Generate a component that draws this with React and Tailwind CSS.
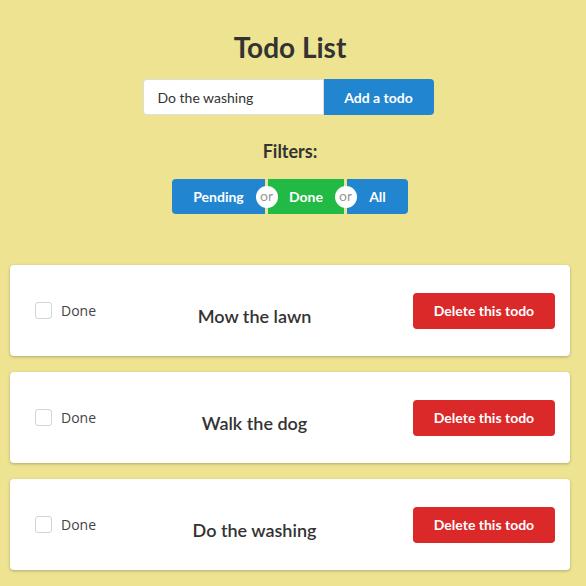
import React from "react";

const todos = ["Mow the lawn", "Walk the dog", "Do the washing"];

function Or() {
  return (
    <div className="relative w-[3px] self-stretch">
      <div className="absolute left-1/2 top-1/2 z-10 flex h-[22px] w-[22px] -translate-x-1/2 -translate-y-1/2 items-center justify-center rounded-full bg-white text-[14px] font-normal leading-none text-[#999]">
        <span className="-mt-[2px]">or</span>
      </div>
    </div>
  );
}

export default function App() {
  return (
    <div
      className="min-h-[586px] w-[586px] bg-[#ede391] text-[#333]"
      style={{ fontFamily: "Lato, 'Liberation Sans', sans-serif" }}
    >
      <div className="flex w-[580px] flex-col items-center pt-[29px]">
        <h1 className="text-[28px] font-bold leading-[36px]">Todo List</h1>
        <div className="mr-[4px] mt-[14px] flex h-[36px]">
          <div className="flex w-[181px] items-center rounded-l-[4px] border border-[rgba(34,36,38,0.15)] bg-white pl-[14px] text-[14px] text-[#333]">
            Do the washing
          </div>
          <button className="w-[110px] rounded-r-[4px] bg-[#2185d0] text-[14px] font-bold text-white">
            Add a todo
          </button>
        </div>
        <h3 className="mt-[25px] text-[18px] font-bold leading-[23px]">Filters:</h3>
        <div className="mt-[16px] flex h-[35px] text-[14px] font-bold text-white">
          <button className="w-[93px] rounded-l-[4px] bg-[#2185d0]">Pending</button>
          <Or />
          <button className="w-[76px] bg-[#21ba45]">Done</button>
          <Or />
          <button className="w-[61px] rounded-r-[4px] bg-[#2185d0]">All</button>
        </div>
      </div>
      <div className="mt-[51px] flex flex-col gap-[16px] px-[10px] pb-[20px]">
        {todos.map((t) => (
          <div
            key={t}
            className="flex h-[91px] w-[560px] items-center rounded-[4px] bg-white pl-[25px] pr-[15px] shadow-[0_1px_3px_0_rgba(34,36,38,0.3)]"
          >
            <div className="flex items-center">
              <div className="h-[17px] w-[17px] rounded-[3px] border border-[#d4d4d5] bg-white" />
              <span
                className="ml-[9px] text-[14px] text-[#444]"
                style={{ fontFamily: "'Open Sans', sans-serif" }}
              >
                Done
              </span>
            </div>
            <div className="mt-[11px] flex-1 text-center text-[18px] font-semibold">{t}</div>
            <button className="h-[36px] w-[142px] rounded-[4px] bg-[#db2828] text-[14px] font-bold text-white">
              Delete this todo
            </button>
          </div>
        ))}
      </div>
    </div>
  );
}
